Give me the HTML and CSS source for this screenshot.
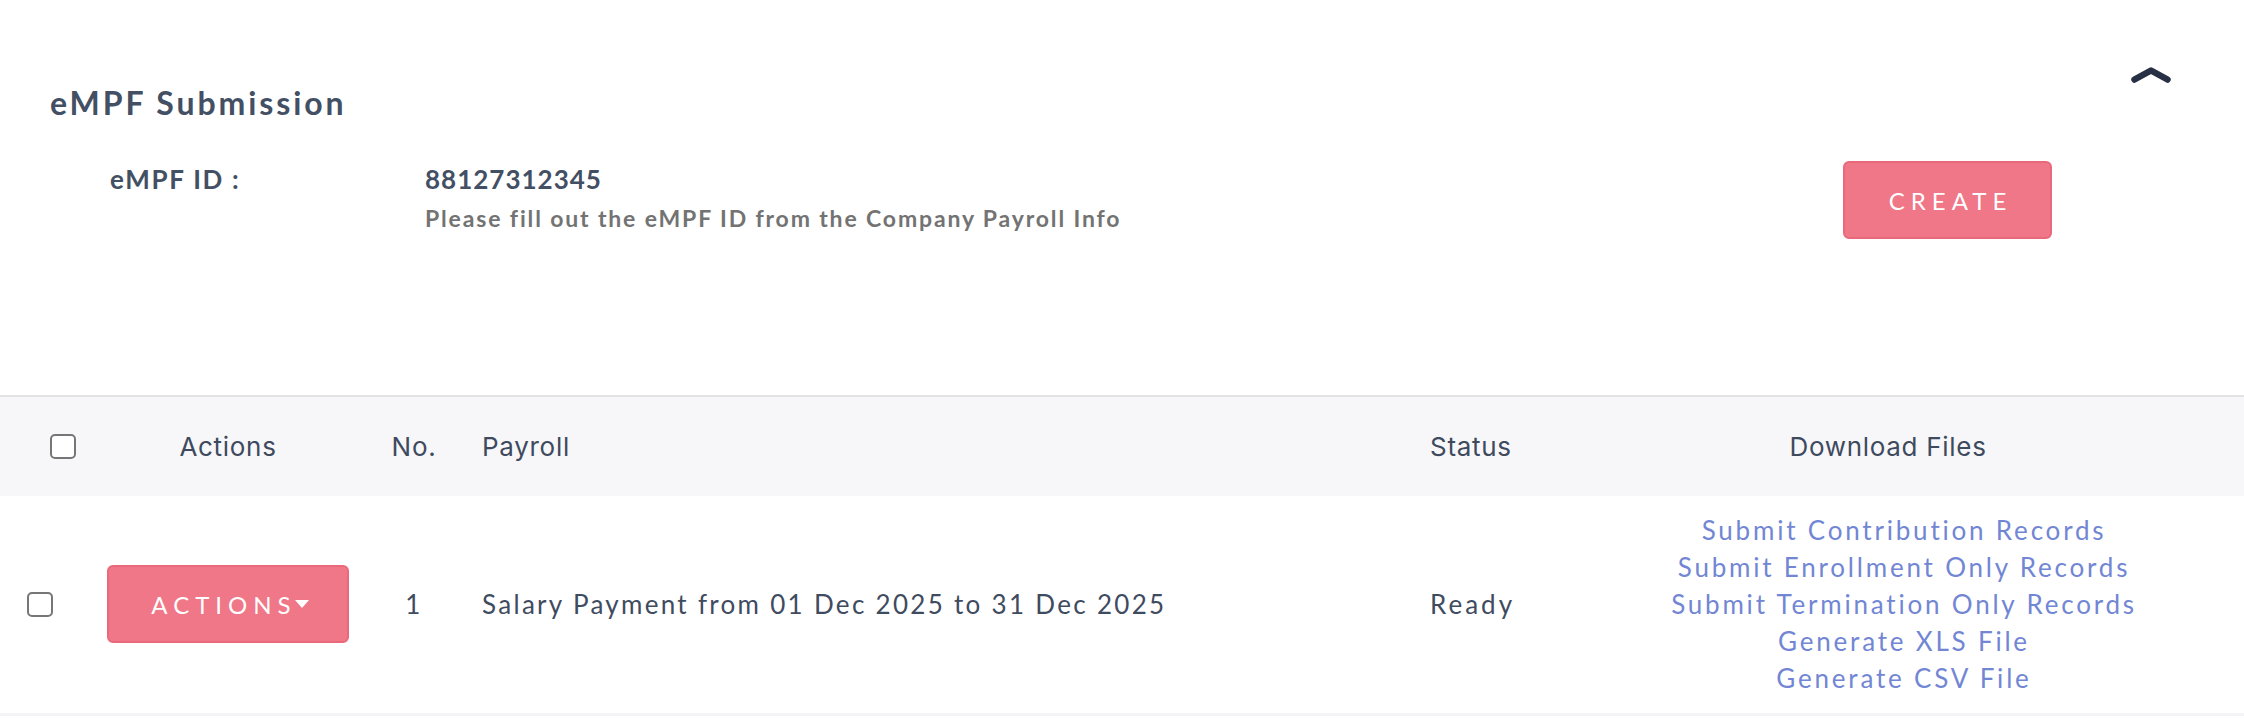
FILE: index.html
```html
<!DOCTYPE html>
<html lang="en">
<head>
<meta charset="utf-8">
<title>eMPF Submission</title>
<link rel="stylesheet" href="styles.css">
</head>
<body>
<main class="page">
  <section class="card">
    <div class="card-head">
      <h2 class="card-title">eMPF Submission</h2>
      <button class="collapse" type="button" aria-label="Collapse">
        <svg width="40" height="16" viewBox="0 0 40 16"><path d="M3.5 12.5 L20 3.5 L36.5 12.5" fill="none" stroke="#283046" stroke-width="6.5" stroke-linecap="round" stroke-linejoin="round"/></svg>
      </button>
    </div>
    <div class="id-row">
      <div class="id-label">eMPF ID :</div>
      <div class="id-value">
        <div class="id-number">88127312345</div>
        <div class="id-hint">Please fill out the eMPF ID from the Company Payroll Info</div>
      </div>
      <button class="btn btn-create" type="button">CREATE</button>
    </div>
  </section>

  <table class="grid">
    <colgroup>
      <col class="w-check">
      <col class="w-actions">
      <col class="w-no">
      <col class="w-payroll">
      <col class="w-status">
      <col class="w-files">
    </colgroup>
    <thead>
      <tr>
        <th class="c-check"><input class="check" type="checkbox"></th>
        <th class="c-center">Actions</th>
        <th class="c-center">No.</th>
        <th class="c-left">Payroll</th>
        <th class="c-left">Status</th>
        <th class="c-center c-files-head">Download Files</th>
      </tr>
    </thead>
    <tbody>
      <tr>
        <td class="c-check c-check-body"><input class="check" type="checkbox"></td>
        <td class="c-center"><button class="btn btn-actions" type="button">ACTIONS<span class="caret"></span></button></td>
        <td class="c-center">1</td>
        <td class="c-left">Salary Payment from 01 Dec 2025 to 31 Dec 2025</td>
        <td class="c-left c-status">Ready</td>
        <td class="c-center">
          <div class="links">
            <a href="#">Submit Contribution Records</a>
            <a href="#">Submit Enrollment Only Records</a>
            <a href="#">Submit Termination Only Records</a>
            <a href="#">Generate XLS File</a>
            <a href="#">Generate CSV File</a>
          </div>
        </td>
      </tr>
    </tbody>
  </table>
</main>
</body>
</html>
```

FILE: styles.css
```css
* { box-sizing: border-box; }

html, body {
  margin: 0;
  padding: 0;
  background: #ffffff;
}

body {
  font-family: "Lato", "Open Sans", sans-serif;
  color: #3f4b5f;
}

.page {
  width: 2244px;
}

.card {
  padding: 67px 73px 156px 50px;
}

.card-head {
  display: flex;
  justify-content: space-between;
  align-items: flex-start;
}

.card-title {
  margin: 20px 0 0 0;
  font-size: 32px;
  line-height: 32px;
  font-weight: 700;
  letter-spacing: 2.9px;
  color: #434f63;
}

.collapse {
  border: 0;
  background: none;
  padding: 0;
  margin: 0;
  width: 40px;
  height: 16px;
  display: block;
  cursor: pointer;
}

.collapse svg { display: block; }

.id-row {
  display: flex;
  align-items: flex-start;
  margin-top: 42px;
  padding: 0 119px 0 60px;
}

.id-label {
  width: 315px;
  padding-top: 0;
  font-size: 26px;
  line-height: 36px;
  font-weight: 700;
  letter-spacing: 1.7px;
  color: #434f63;
}

.id-value {
  flex: 1;
  padding-top: 0;
}

.id-number {
  font-size: 26px;
  line-height: 36px;
  font-weight: 700;
  letter-spacing: 1px;
  color: #434f63;
}

.id-hint {
  margin-top: 5px;
  font-size: 23px;
  line-height: 32px;
  font-weight: 700;
  letter-spacing: 1.85px;
  color: #737373;
}

.btn {
  font-family: "Lato", "Open Sans", sans-serif;
  background: #ef7787;
  border: 2px solid #e9687a;
  border-radius: 6px;
  color: #ffffff;
  font-size: 24px;
  font-weight: 400;
  letter-spacing: 6px;
  height: 78px;
  cursor: pointer;
}

.btn-create {
  width: 209px;
  padding: 0 0 0 6px;
}

.btn-actions {
  width: 242px;
  padding: 0 0 0 4px;
  display: inline-flex;
  align-items: center;
  justify-content: center;
  vertical-align: middle;
}

.caret {
  display: inline-block;
  width: 0;
  height: 0;
  margin-left: -2px;
  border-left: 7.5px solid transparent;
  border-right: 7.5px solid transparent;
  border-top: 8px solid #ffffff;
}

/* table */
.grid {
  width: 2244px;
  border-collapse: collapse;
  table-layout: fixed;
  border-top: 2px solid #e2e2e4;
  border-bottom: 3px solid #f4f4f6;
}

.w-check { width: 100px; }
.w-actions { width: 256px; }
.w-no { width: 116px; }
.w-payroll { width: 948px; }
.w-status { width: 144px; }
.w-files { width: 680px; }

.grid th {
  height: 100px;
  padding: 0;
  background: #f7f7f9;
  font-family: "Inter", "Noto Sans", sans-serif;
  font-size: 26px;
  font-weight: 400;
  letter-spacing: 0.7px;
  color: #3e4a5e;
  vertical-align: middle;
}

.grid td {
  height: 218px;
  padding: 0;
  font-size: 26px;
  letter-spacing: 2.3px;
  color: #3f4b5f;
  vertical-align: middle;
}

.c-center { text-align: center; }
.c-left { text-align: left; padding-left: 10px !important; }
.grid td.c-status { letter-spacing: 3px; }

.c-check { text-align: left; padding-left: 50px !important; }
.c-check-body { padding-left: 27px !important; }
.c-files-head { padding-right: 32px !important; }

.check {
  -webkit-appearance: none;
  appearance: none;
  display: block;
  width: 26px;
  height: 25px;
  margin: 0;
  border: 2px solid #767676;
  border-radius: 5px;
  background: #ffffff;
}

.links {
  display: flex;
  flex-direction: column;
  align-items: center;
}

.links a {
  font-size: 26px;
  line-height: 37px;
  letter-spacing: 2.8px;
  color: #7286d4;
  text-decoration: none;
}
```
